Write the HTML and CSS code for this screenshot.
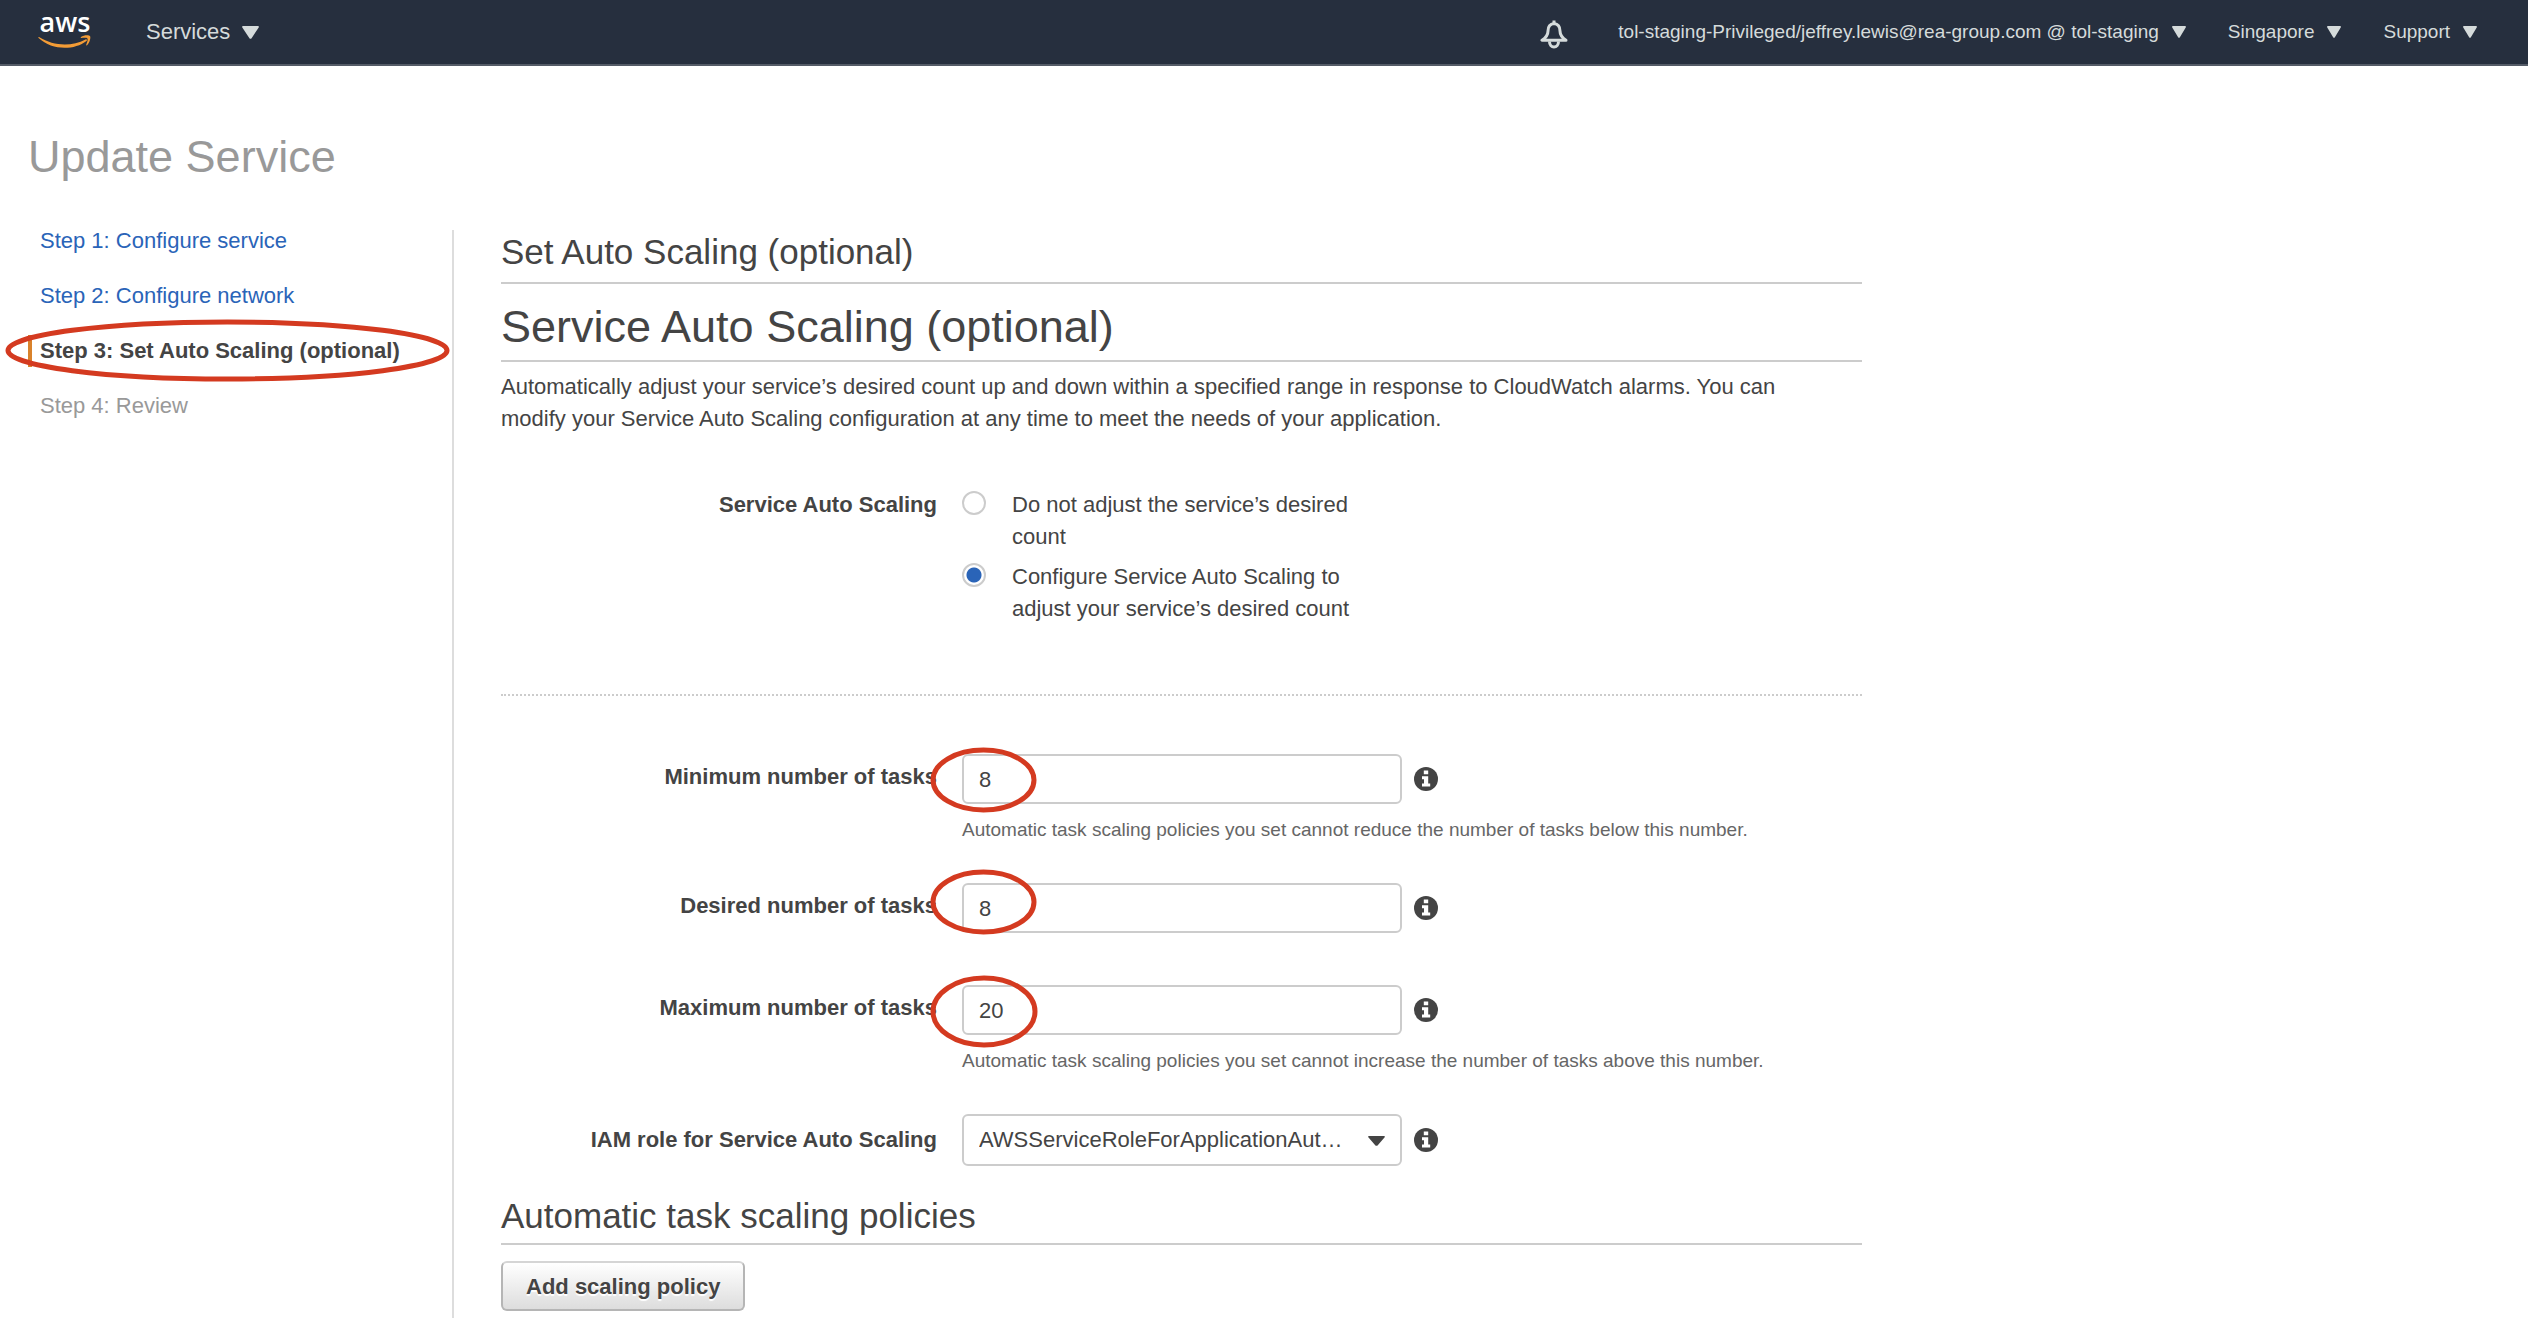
FILE: index.html
```html
<!DOCTYPE html>
<html lang="en">
<head>
<meta charset="utf-8">
<meta name="viewport" content="width=device-width, initial-scale=1">
<title>Update Service</title>
<link rel="stylesheet" href="styles.css">
</head>
<body>
<svg class="sprite" aria-hidden="true">
  <symbol id="caret" viewBox="0 0 16 13" preserveAspectRatio="none"><path d="M1.200 0h13.600c.9 0 1.400.9.9 1.600L9 12.200c-.5.8-1.500.8-2 0L.3 1.600C-.2.9.3 0 1.200 0z" fill="currentColor"/></symbol>
  <symbol id="info" viewBox="0 0 24 24">
    <circle cx="12" cy="12" r="12" fill="currentColor"/>
    <path d="M9.800 3.500h4.400v3.700H9.800zM8 9.200h6.200v7.300h2v3H8v-3h2v-4.300H8z" fill="#fff"/>
  </symbol>
</svg>

<header class="topbar">
  <a class="logo" href="#" aria-label="AWS home">
    <svg width="54" height="49" viewBox="0 -9 54 49">
      <text class="logo-text" x="27" y="23" text-anchor="middle">aws</text>
      <path d="M1 28c15 9.500 33 9.500 46.500 2.500 1.200-.5 2 .6 1 1.400C36 41.500 14 41.500.6 29c-.6-.6-.2-1.300.4-1z" fill="#f39c36"/>
      <path d="M43 28c2.500-2 8-2.200 9-1 1 1.300-.3 7-3 9.200-.6.4-1 .1-.8-.5.7-1.700 2-5.300 1.200-6.300-.9-1.100-4.300-.6-6-.4-.700.1-.8-.6-.4-1z" fill="#f39c36"/>
    </svg>
  </a>
  <button class="menu menu-services" type="button">Services <svg class="caret"><use href="#caret"/></svg></button>
  <nav class="account" aria-label="Account">
    <button class="bell" type="button" aria-label="Notifications">
      <svg width="28" height="29" viewBox="0 0 28 29" fill="none" stroke="currentColor" stroke-width="3" stroke-linejoin="round">
        <path d="M14 3.500c-4 .5-6 3.500-6 7.500 0 4.500-2.500 7-6 9.300h24c-3.500-2.300-6-4.800-6-9.300 0-4-2-7-6-7.500z"/>
        <path d="M14 .5v3M9.500 21.500c0 3.500 2 5.500 4.500 5.500s4.500-2 4.500-5.500"/>
      </svg>
    </button>
    <button class="menu" type="button">tol-staging-Privileged/jeffrey.lewis@rea-group.com @ tol-staging <svg class="caret"><use href="#caret"/></svg></button>
    <button class="menu" type="button">Singapore <svg class="caret"><use href="#caret"/></svg></button>
    <button class="menu" type="button">Support <svg class="caret"><use href="#caret"/></svg></button>
  </nav>
</header>

<h1 class="page-title">Update Service</h1>

<div class="wizard">
  <nav class="steps" aria-label="Steps">
    <ol class="step-list">
      <li><a href="#">Step 1: Configure service</a></li>
      <li><a href="#">Step 2: Configure network</a></li>
      <li class="current" aria-current="step">Step 3: Set Auto Scaling (optional)
        <svg class="mark mark-step" aria-hidden="true"><ellipse cx="50%" cy="50%"/></svg></li>
      <li class="upcoming">Step 4: Review</li>
    </ol>
  </nav>

  <main class="content">
    <form class="form">
      <h2 class="heading">Set Auto Scaling (optional)</h2>
      <h2 class="heading heading-large">Service Auto Scaling (optional)</h2>
      <p class="intro">Automatically adjust your service’s desired count up and down within a specified range in response to CloudWatch alarms. You can modify your Service Auto Scaling configuration at any time to meet the needs of your application.</p>

      <div class="row row-mode" role="radiogroup" aria-labelledby="mode-label">
        <span class="label" id="mode-label">Service Auto Scaling</span>
        <div class="options">
          <label class="option"><input class="radio" type="radio" name="mode"><span>Do not adjust the service’s desired count</span></label>
          <label class="option"><input class="radio" type="radio" name="mode" checked><span>Configure Service Auto Scaling to adjust your service’s desired count</span></label>
        </div>
      </div>

      <div class="row">
        <label class="label label-field" for="min">Minimum number of tasks</label>
        <div>
          <div class="control">
            <input class="field" id="min" type="text" value="8">
            <svg class="info"><use href="#info"/></svg>
            <svg class="mark mark-min" aria-hidden="true"><ellipse cx="50%" cy="50%"/></svg>
          </div>
          <p class="help">Automatic task scaling policies you set cannot reduce the number of tasks below this number.</p>
        </div>
      </div>

      <div class="row row-plain">
        <label class="label label-field" for="desired">Desired number of tasks</label>
        <div class="control">
          <input class="field" id="desired" type="text" value="8">
          <svg class="info"><use href="#info"/></svg>
          <svg class="mark mark-desired" aria-hidden="true"><ellipse cx="50%" cy="50%"/></svg>
        </div>
      </div>

      <div class="row">
        <label class="label label-field" for="max">Maximum number of tasks</label>
        <div>
          <div class="control">
            <input class="field" id="max" type="text" value="20">
            <svg class="info"><use href="#info"/></svg>
            <svg class="mark mark-max" aria-hidden="true"><ellipse cx="50%" cy="50%"/></svg>
          </div>
          <p class="help">Automatic task scaling policies you set cannot increase the number of tasks above this number.</p>
        </div>
      </div>

      <div class="row row-role">
        <label class="label" for="role">IAM role for Service Auto Scaling</label>
        <div class="control">
          <div class="select-box">
            <select class="field select" id="role"><option>AWSServiceRoleForApplicationAut…</option></select>
            <svg class="select-caret"><use href="#caret"/></svg>
          </div>
          <svg class="info"><use href="#info"/></svg>
        </div>
      </div>

      <h2 class="heading heading-policies">Automatic task scaling policies</h2>
      <button class="button" type="button">Add scaling policy</button>
    </form>
  </main>
</div>
</body>
</html>
```
FILE: styles.css
```css
* { box-sizing: border-box; }

body {
  margin: 0;
  min-height: 100vh;
  display: flex;
  flex-direction: column;
  background: #fff;
  color: #444;
  font: 22px/32px "Helvetica Neue", "Liberation Sans", Arial, sans-serif;
}

h1, h2, p, ol { margin: 0; padding: 0; font-weight: normal; }
ol { list-style: none; }
svg { display: block; flex: none; }
button, input, select { font: inherit; color: inherit; }
.sprite { position: absolute; width: 0; height: 0; }

/* Top bar */
.topbar {
  display: flex;
  align-items: center;
  height: 66px;
  padding: 0 51px 0 38px;
  background: #262f3e;
  border-bottom: 2px solid #545b67;
  color: #d5dbdb;
}
.logo { display: block; align-self: flex-start; }
.logo-text { font: 600 27px "Open Sans", "Noto Sans", sans-serif; fill: #fff; }
.menu, .bell {
  display: flex;
  align-items: center;
  padding: 0;
  border: 0;
  background: none;
  white-space: nowrap;
}
.menu { gap: 13px; font-size: 19px; }
.menu-services { gap: 12px; margin-left: 54px; font-size: 22px; }
.caret { width: 14px; height: 12px; }
.menu-services .caret { width: 17px; height: 13px; }
.account { display: flex; align-items: center; gap: 42px; margin-left: auto; }
.bell { margin: 4px 8px 0 0; }

.page-title {
  margin: 62px 0 38px;
  padding-left: 28px;
  font-size: 45px;
  line-height: 58px;
  color: #999;
}

/* Steps and content columns */
.wizard { flex: 1; display: flex; }
.steps { flex: 0 0 452px; padding: 1px 0 0 28px; }
.step-list { display: flex; flex-direction: column; gap: 23px; }
.step-list li { position: relative; padding-left: 12px; }
.step-list a { color: #2a64b8; text-decoration: none; }
.step-list .current { padding-left: 8px; border-left: 4px solid #d9822b; font-weight: bold; }
.step-list .upcoming { color: #999; }

.content {
  flex: 1;
  min-width: 0;
  margin-top: 6px;
  padding: 0 24px 5px 47px;
  border-left: 2px solid #ddd;
}
.form { max-width: 1361px; }

.heading {
  padding-bottom: 8px;
  border-bottom: 2px solid #ccc;
  font-size: 35px;
  line-height: 44px;
}
.heading-large { margin-top: 14px; padding-bottom: 4px; font-size: 45px; line-height: 58px; }
.heading-policies { margin: 28px 0 16px; padding-bottom: 5px; }
.intro { margin-top: 9px; padding-right: 32px; }

/* Form rows */
.row {
  display: grid;
  grid-template-columns: minmax(0, 436px) minmax(0, 1fr);
  column-gap: 25px;
  margin-bottom: 39px;
}
.row-mode { margin: 54px 0 58px; padding-bottom: 69px; border-bottom: 2px dotted #ccc; }
.row-plain { margin: 1px 0 52px; }
.row-role { align-items: center; margin-bottom: 0; }
.label { text-align: right; font-weight: bold; }
.label-field { padding-top: 7px; }

.options { display: flex; flex-direction: column; gap: 8px; max-width: 420px; }
.option { display: flex; gap: 26px; }
.radio {
  appearance: none;
  flex: none;
  width: 24px;
  height: 24px;
  margin: 2px 0 0;
  border: 2px solid #ccc;
  border-radius: 50%;
  background: #fff;
}
.radio:checked { background: radial-gradient(circle, #2a64b8 7px, #fff 8px); }

.control { position: relative; display: flex; align-items: center; gap: 12px; }
.field {
  width: 440px;
  height: 50px;
  padding: 2px 15px 0;
  border: 2px solid #ccc;
  border-radius: 6px;
  background: #fff;
}
.select-box { position: relative; }
.select { display: block; appearance: none; height: 52px; padding: 0 40px 0 15px; }
.select-caret {
  position: absolute;
  right: 17px;
  top: 22px;
  width: 17px;
  height: 10px;
  pointer-events: none;
}
.info { width: 24px; height: 24px; }
.help { margin-top: 12px; font-size: 19px; line-height: 28px; color: #666; }

.button {
  display: block;
  height: 50px;
  padding: 2px 23px 0;
  border: 2px solid #b5b5b5;
  border-top-color: #d5d5d5;
  border-radius: 6px;
  background: linear-gradient(#fff, #ddd);
  font-weight: bold;
  text-shadow: 0 2px 1px #fff;
}

/* Highlight rings laid over the page */
.mark { position: absolute; overflow: visible; pointer-events: none; }
.mark ellipse { fill: none; stroke: #d43a20; stroke-width: 5px; rx: 50%; ry: 50%; }
.mark-step { left: -24px; top: -13px; width: 439px; height: 57px; }
.mark-min { left: -29px; top: -4px; width: 101px; height: 60px; }
.mark-desired { left: -29px; top: -11px; width: 101px; height: 60px; }
.mark-max { left: -29px; top: -7px; width: 102px; height: 67px; }
```
